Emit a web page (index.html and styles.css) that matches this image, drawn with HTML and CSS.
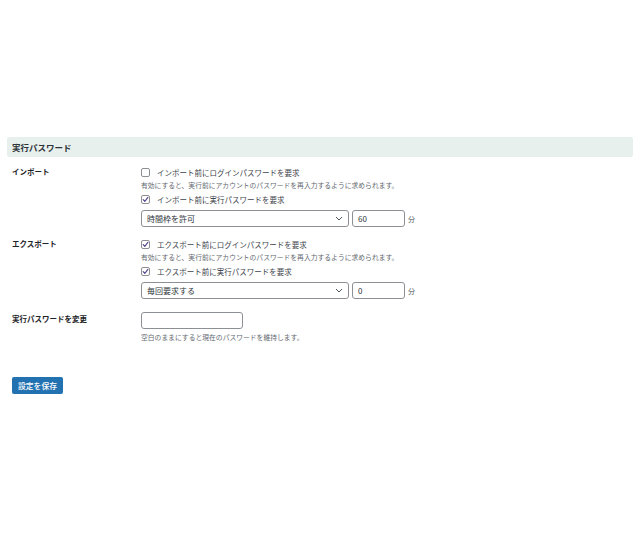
FILE: index.html
```html
<!DOCTYPE html>
<html lang="ja">
<head>
<meta charset="utf-8">
<link rel="stylesheet" href="styles.css">
</head>
<body>
<div class="page">
  <div class="section-title">実行パスワード</div>
  <div class="form">
    <div class="row">
      <div class="label">インポート</div>
      <div class="fields">
        <div class="line"><span class="cb"></span><span class="cb-text">インポート前にログインパスワードを要求</span></div>
        <div class="desc">有効にすると、実行前にアカウントのパスワードを再入力するように求められます。</div>
        <div class="line"><span class="cb"><svg viewBox="0 0 9 9" width="9" height="9"><path d="M2.2 4.6 L3.8 6.3 L6.9 2.4" fill="none" stroke="#5b4a91" stroke-width="1.2" stroke-linecap="round" stroke-linejoin="round"/></svg></span><span class="cb-text">インポート前に実行パスワードを要求</span></div>
        <div class="controls">
          <div class="select"><span>時間枠を許可</span><svg class="chev" viewBox="0 0 8 5" width="8" height="5"><path d="M1 1 L4 4 L7 1" fill="none" stroke="#50575e" stroke-width="1"/></svg></div>
          <div class="num">60</div>
          <span class="unit">分</span>
        </div>
      </div>
    </div>
    <div class="row row-gap">
      <div class="label">エクスポート</div>
      <div class="fields">
        <div class="line"><span class="cb"><svg viewBox="0 0 9 9" width="9" height="9"><path d="M2.2 4.6 L3.8 6.3 L6.9 2.4" fill="none" stroke="#5b4a91" stroke-width="1.2" stroke-linecap="round" stroke-linejoin="round"/></svg></span><span class="cb-text">エクスポート前にログインパスワードを要求</span></div>
        <div class="desc">有効にすると、実行前にアカウントのパスワードを再入力するように求められます。</div>
        <div class="line"><span class="cb"><svg viewBox="0 0 9 9" width="9" height="9"><path d="M2.2 4.6 L3.8 6.3 L6.9 2.4" fill="none" stroke="#5b4a91" stroke-width="1.2" stroke-linecap="round" stroke-linejoin="round"/></svg></span><span class="cb-text">エクスポート前に実行パスワードを要求</span></div>
        <div class="controls">
          <div class="select"><span>毎回要求する</span><svg class="chev" viewBox="0 0 8 5" width="8" height="5"><path d="M1 1 L4 4 L7 1" fill="none" stroke="#50575e" stroke-width="1"/></svg></div>
          <div class="num">0</div>
          <span class="unit">分</span>
        </div>
      </div>
    </div>
    <div class="row row-pw">
      <div class="label label-pw">実行パスワードを変更</div>
      <div class="fields">
        <div class="pw"></div>
        <div class="desc desc-pw">空白のままにすると現在のパスワードを維持します。</div>
      </div>
    </div>
  </div>
  <div class="actions"><button class="save">設定を保存</button></div>
</div>
</body>
</html>
```

FILE: styles.css
```css
html, body {
  margin: 0;
  padding: 0;
  background: #ffffff;
}
body {
  font-family: "Noto Sans CJK JP", "Noto Sans", sans-serif;
  color: #1d2327;
}
.page {
  padding-top: 137px;
  padding-left: 7px;
  width: 626px;
}
.section-title {
  height: 20px;
  line-height: 20px;
  background: #e8f0ed;
  border-radius: 2px;
  padding-left: 5px;
  font-size: 8.5px;
  font-weight: 700;
  color: #2c3338;
}
.form {
  margin-top: 8px;
  padding-left: 5px;
}
.row {
  display: grid;
  grid-template-columns: 129px 1fr;
}
.row-gap {
  margin-top: 10px;
}
.row-pw {
  margin-top: 13px;
}
.label {
  font-size: 7.5px;
  font-weight: 700;
  line-height: 14px;
  color: #1d2327;
}
.label-pw {
  line-height: 13px;
}
.fields {
  display: flex;
  flex-direction: column;
}
.line {
  height: 14px;
  display: flex;
  align-items: center;
}
.cb {
  width: 9px;
  height: 9px;
  box-sizing: border-box;
  border: 1px solid #8c8f94;
  border-radius: 2px;
  background: #fff;
  display: flex;
  align-items: center;
  justify-content: center;
}
.cb svg {
  display: block;
  flex: none;
}
.cb-text {
  margin-left: 7px;
  font-size: 7.5px;
  color: #3c434a;
}
.desc {
  height: 13px;
  line-height: 13px;
  font-size: 6.8px;
  color: #646970;
  white-space: nowrap;
}
.desc-pw {
  margin-top: 2px;
}
.controls {
  margin-top: 4px;
  display: flex;
  align-items: center;
  gap: 3px;
}
.select {
  width: 208px;
  height: 17px;
  box-sizing: border-box;
  border: 1px solid #8c8f94;
  border-radius: 3px;
  display: flex;
  align-items: center;
  justify-content: space-between;
  padding: 0 5px 0 5px;
  font-size: 8px;
  color: #2c3338;
}
.chev {
  display: block;
}
.num {
  width: 53px;
  height: 17px;
  box-sizing: border-box;
  border: 1px solid #8c8f94;
  border-radius: 3px;
  padding-left: 5px;
  font-size: 8px;
  line-height: 15px;
  color: #2c3338;
}
.unit {
  font-size: 7px;
  color: #50575e;
}
.pw {
  width: 102px;
  height: 17px;
  box-sizing: border-box;
  border: 1px solid #8c8f94;
  border-radius: 3px;
  background: #fff;
}
.actions {
  margin-top: 33px;
  padding-left: 5px;
}
.save {
  display: block;
  height: 17px;
  width: 51px;
  padding: 0;
  border: none;
  border-radius: 2px;
  background: #2271b1;
  color: #fff;
  font-family: "Noto Sans CJK JP", "Noto Sans", sans-serif;
  font-size: 7.8px;
  font-weight: 500;
}
```
